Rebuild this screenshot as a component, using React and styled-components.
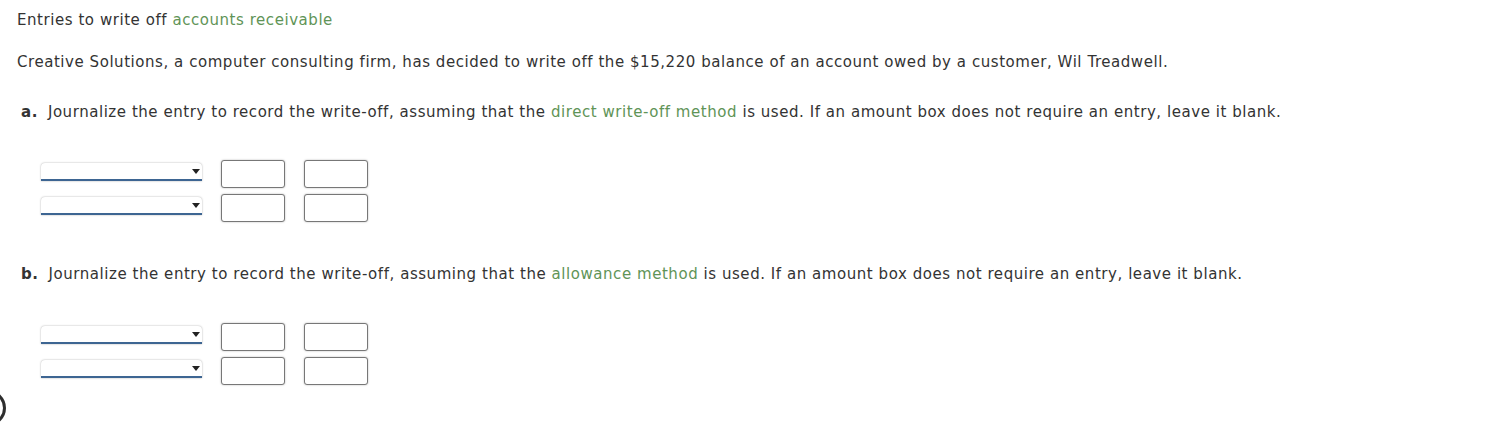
import React from "react";
import styled, { createGlobalStyle } from "styled-components";

const GlobalStyle = createGlobalStyle`
  html, body { margin: 0; padding: 0; background: #fff; }
  body { font-family: "DejaVu Sans", Verdana, sans-serif; color: #333; overflow: hidden; }
`;

const Page = styled.div`
  position: relative;
  width: 1488px;
  height: 442px;
  box-sizing: border-box;
  padding: 10px 17px 0;
  font-size: 15px;
  letter-spacing: 0.55px;
  line-height: 20px;
`;

const Title = styled.div`
  margin: 0;
`;

const Para = styled.p`
  margin: 22px 0 0;
`;

const Part = styled.p`
  margin: ${(p) => p.$top}px 0 0 4px;
`;

const PartLabel = styled.b`
  font-weight: bold;
  margin-right: 10px;
`;

const Term = styled.span`
  color: #5f9457;
`;

const Journal = styled.div`
  margin: ${(p) => p.$top}px 0 0 24px;
  display: flex;
  flex-direction: column;
  gap: 6px;
`;

const Row = styled.div`
  display: flex;
  align-items: flex-start;
  gap: 19px;
`;

const Select = styled.div`
  position: relative;
  margin-top: 3px;
  width: 161px;
  height: 16px;
  background: #fff;
  border-radius: 4px 4px 0 0;
  border-bottom: 2px solid #3d6592;
  box-shadow: 0 0 2px rgba(0, 0, 0, 0.35);
`;

const Arrow = styled.span`
  position: absolute;
  right: 2px;
  top: 6px;
  width: 0;
  height: 0;
  border-left: 4px solid transparent;
  border-right: 4px solid transparent;
  border-top: 5px solid #222;
`;

const Amount = styled.div`
  width: 62px;
  height: 26px;
  border: 1px solid #777;
  border-radius: 3px;
  background: #fff;
  box-shadow: 0 0 2px rgba(0, 0, 0, 0.3);
`;

const Ring = styled.div`
  position: absolute;
  left: -30px;
  top: 390px;
  width: 30px;
  height: 30px;
  border: 3px solid #2e2e2e;
  border-radius: 50%;
`;

function JournalRows({ top }) {
  return (
    <Journal $top={top}>
      {[0, 1].map((i) => (
        <Row key={i}>
          <Select>
            <Arrow />
          </Select>
          <Amount />
          <Amount />
        </Row>
      ))}
    </Journal>
  );
}

export default function App() {
  return (
    <>
      <GlobalStyle />
      <Page>
        <Title>
          Entries to write off <Term>accounts receivable</Term>
        </Title>
        <Para>
          Creative Solutions, a computer consulting firm, has decided to write off the $15,220 balance of an account owed by a customer, Wil Treadwell.
        </Para>
        <Part $top={30}>
          <PartLabel>a.</PartLabel>Journalize the entry to record the write-off, assuming that the <Term>direct write-off method</Term> is used. If an amount box does not require an entry, leave it blank.
        </Part>
        <JournalRows top={38} />
        <Part $top={42}>
          <PartLabel>b.</PartLabel>Journalize the entry to record the write-off, assuming that the <Term>allowance method</Term> is used. If an amount box does not require an entry, leave it blank.
        </Part>
        <JournalRows top={39} />
        <Ring />
      </Page>
    </>
  );
}
